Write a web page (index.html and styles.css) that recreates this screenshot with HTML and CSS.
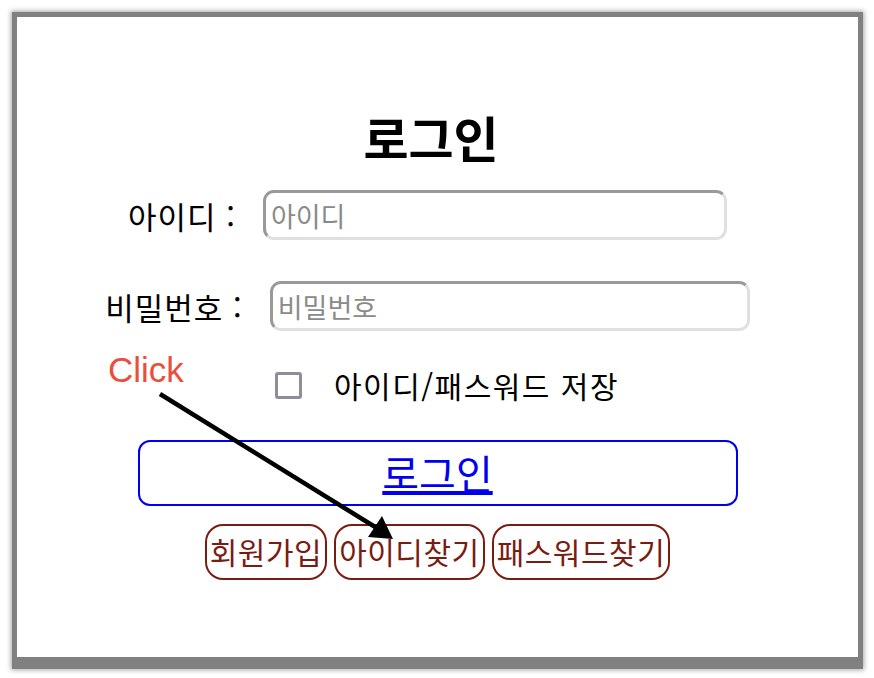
FILE: index.html
```html
<!DOCTYPE html>
<html lang="ko">
<head>
    <meta charset="UTF-8">
    <meta name="viewport" content="width=device-width, initial-scale=1.0">
    <title>로그인</title>
    <link rel="stylesheet" href="styles.css">
</head>
<body>
    <div class="frame">
        <div class="card">
            <h1>로그인</h1>

            <div class="row row-id">
                <label for="userId">아이디 :</label>
                <input type="text" id="userId" class="field field-id" placeholder="아이디">
            </div>

            <div class="row row-pw">
                <label for="userPw">비밀번호 :</label>
                <input type="password" id="userPw" class="field field-pw" placeholder="비밀번호">
            </div>

            <div class="remember">
                <span class="check"></span>
                <span class="remember-text">아이디/패스워드 저장</span>
            </div>

            <a href="#" class="login-button">로그인</a>

            <div class="links">
                <a href="#" class="link-button">회원가입</a>
                <a href="#" class="link-button">아이디찾기</a>
                <a href="#" class="link-button">패스워드찾기</a>
            </div>

            <!-- annotation over the form -->
            <div class="note">Click</div>
            <svg class="arrow" width="874" height="678" viewBox="0 0 874 678">
                <line x1="160" y1="394" x2="380" y2="530" stroke="#000" stroke-width="4.5"/>
                <polygon points="393,539 368,537 382,516" fill="#000"/>
            </svg>
        </div>
    </div>
</body>
</html>
```

FILE: styles.css
```css
body {
    margin: 0;
    padding: 12px;
    background-color: #fff;
    font-family: "Noto Sans CJK KR", "Noto Sans", sans-serif;
    color: #000;
}

.frame {
    width: 841px;
    padding: 5px 5px 12px 5px;
    background-color: #808080;
    box-shadow: 0 0 5px 1px rgba(0, 0, 0, 0.35);
}

.card {
    height: 546px;
    padding-top: 94px;
    background-color: #fff;
    display: flex;
    flex-direction: column;
    align-items: center;
}

h1 {
    margin: 0 0 27px -13px;
    font-size: 49px;
    line-height: 52px;
    font-weight: bold;
}

.row {
    display: flex;
    align-items: center;
    justify-content: center;
    gap: 27px;
    height: 50px;
    margin-left: -20px;
    font-size: 31px;
    letter-spacing: 1px;
}

.row-pw {
    margin-top: 41px;
}

.field {
    box-sizing: border-box;
    height: 50px;
    padding: 0 5px;
    border: 3px solid;
    border-color: #999 #e0e0e0 #e0e0e0 #999;
    border-radius: 11px;
    font-family: inherit;
    font-size: 27px;
    letter-spacing: 0;
    outline: none;
}

.field::placeholder {
    color: #8a8a8a;
}

.field-id {
    width: 464px;
}

.field-pw {
    width: 480px;
}

.remember {
    display: flex;
    align-items: center;
    gap: 32px;
    height: 30px;
    margin-top: 39px;
    margin-left: 19px;
}

.check {
    box-sizing: border-box;
    width: 27px;
    height: 27px;
    border: 3px solid #8e8e99;
    border-radius: 3px;
}

.remember-text {
    font-size: 30px;
    line-height: 30px;
    letter-spacing: 1.5px;
}

.login-button {
    box-sizing: border-box;
    width: 600px;
    height: 66px;
    margin-top: 40px;
    border: 2px solid #0000ee;
    border-radius: 12px;
    color: #0000ee;
    font-size: 40px;
    line-height: 60px;
    text-align: center;
    text-decoration: underline;
}

.links {
    display: flex;
    gap: 7px;
    margin-top: 18px;
}

.link-button {
    box-sizing: border-box;
    height: 56px;
    padding: 0 3px;
    border: 2px solid #7a1c12;
    border-radius: 18px;
    color: #7a1c12;
    font-size: 30px;
    line-height: 50px;
    letter-spacing: 0.5px;
    text-decoration: none;
}

.note {
    position: absolute;
    left: 108px;
    top: 350px;
    font-family: "Liberation Sans", Arial, sans-serif;
    font-size: 35px;
    color: #ea4f3c;
}

.arrow {
    position: absolute;
    left: 0;
    top: 0;
    pointer-events: none;
}
```
